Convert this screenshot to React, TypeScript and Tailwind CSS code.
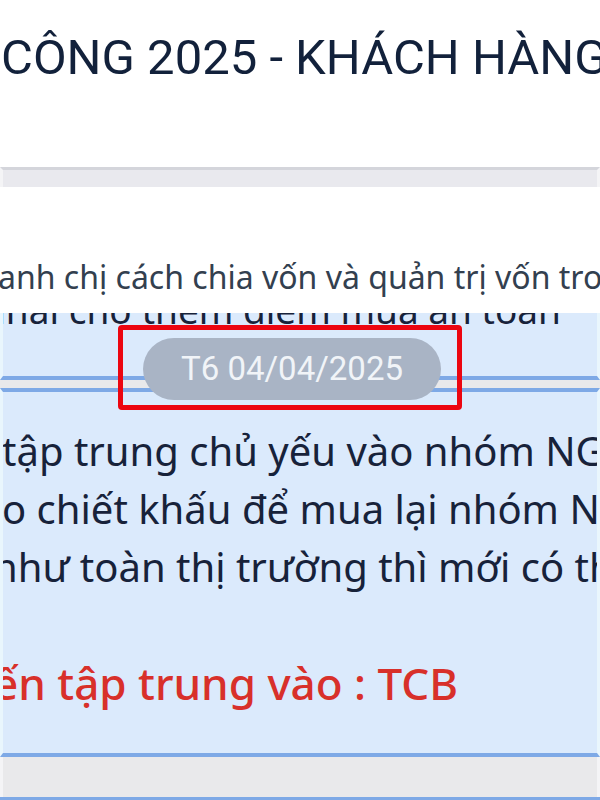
import React from 'react';

const bodyFont = { fontFamily: '"Noto Sans", "Open Sans", sans-serif' };

function DateBadge() {
  return (
    <div className="absolute left-[118px] top-[325px] h-[85px] w-[344px] rounded-[4px] border-[5px] border-[#ec0510]">
      <div className="absolute left-[20px] top-[8px] flex h-[62px] w-[298px] items-center justify-center rounded-full bg-[#a9b4c5] font-['Roboto',sans-serif] text-[33px] text-[#f1f4f8]">
        T6 04/04/2025
      </div>
    </div>
  );
}

export default function App() {
  return (
    <div className="relative h-[800px] w-[600px] overflow-hidden bg-white" style={bodyFont}>
      {/* Group title */}
      <header className="flex h-[167px] items-start overflow-hidden pt-[28px]">
        <h1 className="whitespace-nowrap pl-[1px] font-['Roboto',sans-serif] text-[49px] leading-[60px] font-normal text-[#12213b]">
          CÔNG 2025 - KHÁCH HÀNG
        </h1>
      </header>
      <div className="h-[20px] border-x-[3px] border-t-[3px] border-x-[#f4f4f6] border-t-[#d4d5db] bg-[#e9e9ee]" />

      {/* Quoted message */}
      <div className="flex h-[126px] items-end overflow-hidden pb-[16px]">
        <p className="-ml-[2px] whitespace-nowrap text-[32px] leading-[40px] text-[#33404f]">
          anh chị cách chia vốn và quản trị vốn trong
        </p>
      </div>

      {/* Previous bubble */}
      <div className="h-[67px] overflow-hidden border-x-[3px] border-b-4 border-x-[#e9f6fd] border-b-[#7ea9e6] bg-[#dbeafc]">
        <p className="-mt-[28px] -ml-[20px] whitespace-nowrap text-[37px] leading-[50px] text-[#17223a]">
          nhải chờ thêm điểm mua an toàn
        </p>
      </div>
      <div className="h-[8px] bg-[#e9e9eb]" />

      {/* Current bubble */}
      <div className="h-[369px] overflow-hidden border-x-[3px] border-y-4 border-x-[#e9f6fd] border-y-[#7ea9e6] bg-[#dbeafc] pt-[30px]">
        <div className="whitespace-nowrap text-[40px] leading-[58px] text-[#17223a]">
          <p className="-ml-[1px]">tập trung chủ yếu vào nhóm NGÂN HÀNG</p>
          <p className="-ml-[1px]">o chiết khấu để mua lại nhóm NGÂN HÀNG</p>
          <p className="-ml-[10px]">như toàn thị trường thì mới có thể</p>
        </div>
        <p className="-ml-[10px] mt-[62px] whitespace-nowrap text-[44px] leading-[50px] font-medium text-[#d8302a]">
          ến tập trung vào : TCB
        </p>
      </div>
      <div className="h-[40px] border-x-[3px] border-x-[#f4f4f6] bg-[#e9e9eb]" />
      <div className="h-[4px] bg-[#7ea9e6]" />

      <DateBadge />
    </div>
  );
}
